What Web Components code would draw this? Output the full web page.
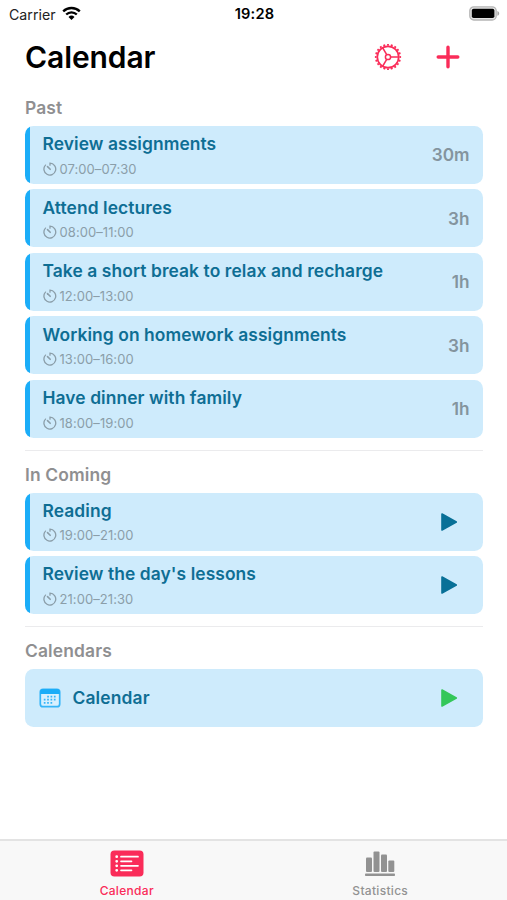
<!DOCTYPE html>
<html lang="en">
<head>
    <meta charset="UTF-8">
    <meta name="viewport" content="width=device-width, initial-scale=1.0">
    <title>Calendar</title>
    <style>

    :root {
        --accent: #fa2c59;
        --card: #ceebfc;
        --bar: #1badf8;
        --ink: #0e6e94;
        --muted: #8f8f91;
    }

    body {
        margin: 0;
        font-family: Inter, "Liberation Sans", sans-serif;
        background-color: white;
        color: black;
    }

    </style>
</head>
<body>
    <template id="app-template">
        <style>
        :host {
            display: flex;
            flex-direction: column;
            height: 900px;
            overflow: hidden;
        }
        main {
            flex: 1;
            padding: 0 24.5px 0 25px;
        }
        </style>
        <slot name="status"></slot>
        <slot name="header"></slot>
        <main><slot></slot></main>
        <slot name="tabs"></slot>
    </template>

    <template id="status-template">
        <style>
        :host {
            display: grid;
            grid-template-columns: 1fr auto 1fr;
            align-items: center;
            height: 28px;
            padding: 0 7px 0 9px;
            box-sizing: border-box;
            font-size: 14.2px;
        }
        .carrier {
            display: flex;
            align-items: center;
            gap: 6px;
            color: #222;
        }
        .carrier svg {
            margin-top: -2px;
        }
        .time {
            font-weight: 600;
            font-size: 14.6px;
            letter-spacing: .2px;
        }
        .battery {
            justify-self: end;
            margin-top: -2px;
        }
        svg {
            display: block;
        }
        </style>
        <div class="carrier">
            <slot name="carrier"></slot>
            <svg width="19" height="15" viewBox="0 0 19 15" fill="none" stroke="#000" stroke-width="2.3">
                <path d="M1.2 5.4a11.8 11.8 0 0 1 16.6 0"/>
                <path d="M4.2 8.5a7.5 7.5 0 0 1 10.6 0"/>
                <path d="M9.5 14 6.5 11a4.3 4.3 0 0 1 6 0z" fill="#000" stroke="none"/>
            </svg>
        </div>
        <div class="time"><slot name="time"></slot></div>
        <svg class="battery" width="31" height="15" viewBox="0 0 31 15">
            <rect x=".8" y=".8" width="26.4" height="13.2" rx="4" fill="#e4e4e4" stroke="#b5b5b5" stroke-width="1.3"/>
            <rect x="2.8" y="2.7" width="22.6" height="9.4" rx="1.8"/>
            <path d="M28.4 5c2.4 .8 2.4 4 0 4.8z" fill="#a5a5a5"/>
        </svg>
    </template>

    <template id="header-template">
        <style>
        :host {
            display: flex;
            align-items: center;
            box-sizing: border-box;
            height: 56.5px;
            padding: 1.5px 46px 0 25px;
            color: var(--accent);
        }
        h1 {
            flex: 1;
            margin: 0;
            color: black;
            font-size: 30px;
            font-weight: 600;
            letter-spacing: -.1px;
        }
        svg {
            display: block;
        }
        .gear {
            margin-right: 33px;
        }
        </style>
        <h1><slot></slot></h1>
        <svg class="gear" width="28" height="28" viewBox="0 0 28 28" fill="none" stroke="currentColor">
            <circle cx="14" cy="14" r="12.2" stroke-width="1.8" pathLength="40" stroke-dasharray="1 1" stroke-dashoffset=".5"/>
            <circle cx="14" cy="14" r="10.7" stroke-width="1.7"/>
            <circle cx="14" cy="14" r="2.6" stroke-width="1.5"/>
            <path d="M16.6 14H25M12.7 11.7 8.5 4.5M12.7 16.3 8.5 23.5" stroke-width="1.5"/>
        </svg>
        <svg width="26" height="26" viewBox="0 0 26 26" stroke="currentColor" stroke-width="3.4" stroke-linecap="round">
            <path d="M13 3.2v19.6M3.2 13h19.6"/>
        </svg>
    </template>

    <template id="section-template">
        <style>
        :host {
            display: block;
            padding-bottom: 12.3px;
        }
        :host(:not(:first-of-type)) {
            border-top: 1.5px solid #ebebed;
        }
        h2 {
            box-sizing: border-box;
            margin: 0;
            padding-top: 10.5px;
            height: 41.3px;
            line-height: 25px;
            font-size: 17.4px;
            font-weight: 600;
            letter-spacing: .15px;
            color: var(--muted);
        }
        .list {
            display: grid;
            gap: 5.3px;
        }
        </style>
        <h2><slot name="title"></slot></h2>
        <div class="list"><slot></slot></div>
    </template>

    <template id="event-template">
        <style>
        :host {
            display: flex;
            align-items: center;
            box-sizing: border-box;
            height: 58.2px;
            padding-right: 13px;
            border-radius: 8.5px;
            overflow: hidden;
            background: linear-gradient(to right, var(--bar) 5px, var(--card) 5px);
        }
        .text {
            flex: 1;
            padding-left: 17.5px;
        }
        .name {
            padding-top: 1px;
            font-size: 17.4px;
            line-height: 24px;
            font-weight: 600;
            letter-spacing: .09px;
            color: var(--ink);
            white-space: nowrap;
        }
        .time {
            display: flex;
            align-items: center;
            gap: 3px;
            height: 20px;
            margin-top: 2.4px;
            font-size: 13px;
            letter-spacing: .07px;
            color: #8b9ea9;
        }
        .side {
            font-size: 17.2px;
            font-weight: 600;
            color: #84949e;
        }
        </style>
        <div class="text">
            <div class="name"><slot></slot></div>
            <div class="time">
                <svg width="14" height="14" viewBox="0 0 14 14" fill="none" stroke="currentColor" stroke-width="1.3" stroke-linecap="round">
                    <path d="M7 3.2V1.2A5.9 5.9 0 1 1 2.5 3.1"/>
                    <path d="M7.2 7.3 4.5 4.6" stroke-width="1.6"/>
                </svg>
                <slot name="time"></slot>
            </div>
        </div>
        <div class="side"><slot name="side"></slot></div>
    </template>

    <template id="calendar-template">
        <style>
        :host {
            display: flex;
            align-items: center;
            box-sizing: border-box;
            height: 58.2px;
            padding: 0 13px 0 14px;
            border-radius: 8.5px;
            background-color: var(--card);
            color: var(--ink);
            font-size: 17.4px;
            font-weight: 600;
            letter-spacing: .15px;
        }
        .name {
            flex: 1;
            margin-left: 11.5px;
        }
        </style>
        <svg width="22" height="20" viewBox="0 0 22 20">
            <rect x="1.3" y="1.3" width="19.4" height="17.4" rx="2.8" fill="#d8f0fe" stroke="#35b5f8" stroke-width="1.7"/>
            <path d="M1.2 6V3.8Q1.2 1.1 4 1.1H18Q20.8 1.1 20.8 3.8V6z" fill="#1badf8"/>
            <path d="M8.2 8.6h9M4.8 11.7h12.4M4.8 14.8h9.2" stroke="#35b5f8" stroke-width="1.7" stroke-dasharray="1.7 1.65"/>
        </svg>
        <div class="name"><slot></slot></div>
        <slot name="side"></slot>
    </template>

    <template id="play-template">
        <style>
        :host {
            display: block;
            padding-right: 11.5px;
            color: #087097;
        }
        svg {
            display: block;
        }
        </style>
        <svg width="18" height="20" viewBox="0 0 18 20" fill="currentColor" stroke="currentColor" stroke-width="1.6" stroke-linejoin="round">
            <path d="M2 2 16.3 10 2 18z"/>
        </svg>
    </template>

    <template id="tabs-template">
        <style>
        :host {
            display: grid;
            grid-template-columns: 1fr 1fr;
            box-sizing: border-box;
            height: 61px;
            border-top: 2px solid #e3e3e3;
            background-color: #f8f8f8;
        }
        </style>
        <slot></slot>
    </template>

    <template id="tab-template">
        <style>
        :host {
            display: flex;
            flex-direction: column;
            align-items: center;
            padding-top: 9px;
            font-size: 12px;
            font-weight: 500;
            letter-spacing: .3px;
            color: #929292;
        }
        :host([active]) {
            color: var(--accent);
        }
        .label {
            margin-top: 5px;
            line-height: 18px;
        }
        </style>
        <slot name="icon"></slot>
        <div class="label"><slot></slot></div>
    </template>

    <planner-app>
        <status-bar slot="status">
            <span slot="carrier">Carrier</span>
            <span slot="time">19:28</span>
        </status-bar>
        <page-header slot="header">Calendar</page-header>

        <event-section>
            <span slot="title">Past</span>
            <event-card>Review assignments<span slot="time">07:00–07:30</span><span slot="side">30m</span></event-card>
            <event-card>Attend lectures<span slot="time">08:00–11:00</span><span slot="side">3h</span></event-card>
            <event-card>Take a short break to relax and recharge<span slot="time">12:00–13:00</span><span slot="side">1h</span></event-card>
            <event-card>Working on homework assignments<span slot="time">13:00–16:00</span><span slot="side">3h</span></event-card>
            <event-card>Have dinner with family<span slot="time">18:00–19:00</span><span slot="side">1h</span></event-card>
        </event-section>

        <event-section>
            <span slot="title">In Coming</span>
            <event-card>Reading<span slot="time">19:00–21:00</span><play-button slot="side"></play-button></event-card>
            <event-card>Review the day's lessons<span slot="time">21:00–21:30</span><play-button slot="side"></play-button></event-card>
        </event-section>

        <event-section>
            <span slot="title">Calendars</span>
            <calendar-card>Calendar<play-button slot="side" style="color: #34c759"></play-button></calendar-card>
        </event-section>

        <tab-bar slot="tabs">
            <tab-item active>
                <svg slot="icon" width="34" height="27" viewBox="0 0 34 27">
                    <rect x=".5" y=".5" width="33" height="26" rx="4" fill="currentColor"/>
                    <path d="M11 6.7h17M11 11.3h10.5M11 15.8h17M11 20.3h10.5" stroke="#fff" stroke-width="1.7" stroke-linecap="round"/>
                    <path d="M6.7 6.7h.01M6.7 11.3h.01M6.7 15.8h.01M6.7 20.3h.01" stroke="#fff" stroke-width="2.8" stroke-linecap="round"/>
                </svg>
                Calendar
            </tab-item>
            <tab-item>
                <svg slot="icon" width="30" height="27" viewBox="0 0 30 27" fill="currentColor">
                    <rect x="1" y="7.5" width="6" height="14.5" rx="1"/>
                    <rect x="8.5" y="1.5" width="6" height="20.5" rx="1"/>
                    <rect x="16" y="4.5" width="6" height="17.5" rx="1"/>
                    <rect x="23.3" y="10.5" width="6" height="11.5" rx="1"/>
                    <rect x="0" y="23.5" width="30" height="2.6" rx=".8"/>
                </svg>
                Statistics
            </tab-item>
        </tab-bar>
    </planner-app>

    <script>

    // Stamps a template into an open shadow root
    class TemplateElement extends HTMLElement {
        constructor() {
            super();
            const tplContent = document.getElementById(this.constructor.template).content;

            const shadowRoot = this.attachShadow({mode: 'open'});
            shadowRoot.appendChild(tplContent.cloneNode(true));
        }
    }

    class PlannerApp extends TemplateElement {
        static template = 'app-template';
    }

    class StatusBar extends TemplateElement {
        static template = 'status-template';
    }

    class PageHeader extends TemplateElement {
        static template = 'header-template';
    }

    class EventSection extends TemplateElement {
        static template = 'section-template';
    }

    class EventCard extends TemplateElement {
        static template = 'event-template';
    }

    class CalendarCard extends TemplateElement {
        static template = 'calendar-template';
    }

    class PlayButton extends TemplateElement {
        static template = 'play-template';
    }

    class TabBar extends TemplateElement {
        static template = 'tabs-template';
    }

    class TabItem extends TemplateElement {
        static template = 'tab-template';
    }

    customElements.define('planner-app', PlannerApp);
    customElements.define('status-bar', StatusBar);
    customElements.define('page-header', PageHeader);
    customElements.define('event-section', EventSection);
    customElements.define('event-card', EventCard);
    customElements.define('calendar-card', CalendarCard);
    customElements.define('play-button', PlayButton);
    customElements.define('tab-bar', TabBar);
    customElements.define('tab-item', TabItem);

    </script>

</body>
</html>
